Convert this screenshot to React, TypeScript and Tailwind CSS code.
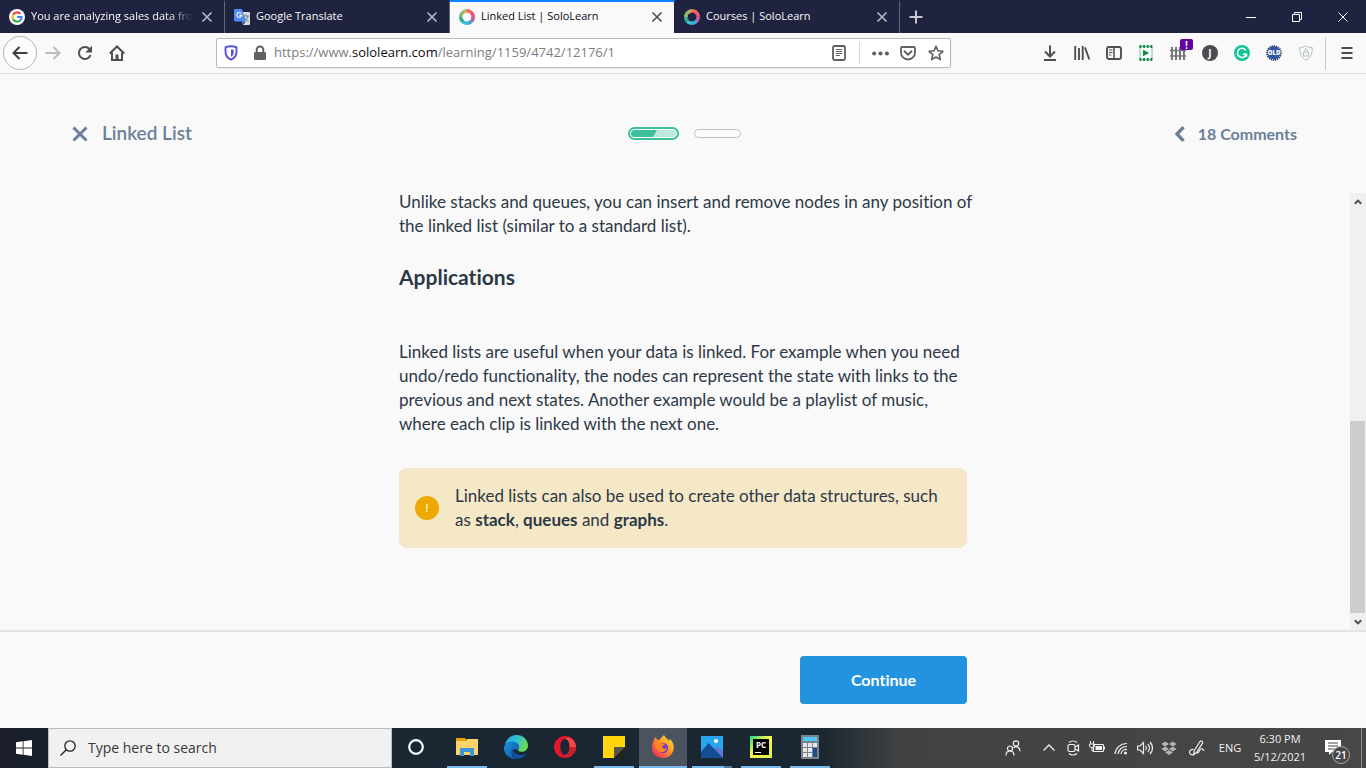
import React from "react";

type IconProps = { children: React.ReactNode; box?: string; className?: string };

function Svg({ children, box = "0 0 16 16", className = "size-4" }: IconProps) {
  return (
    <svg viewBox={box} className={`shrink-0 ${className}`} fill="none" aria-hidden="true">
      {children}
    </svg>
  );
}

function GoogleIcon() {
  return (
    <Svg>
      <circle cx="8" cy="8" r="8" fill="#fff" />
      <g strokeWidth="2.2">
        <path d="M4.1 5.7A4.6 4.6 0 0 1 11.3 4.8" stroke="#ea4335" />
        <path d="M4.1 5.7A4.6 4.6 0 0 0 4.1 10.4" stroke="#fbbc05" />
        <path d="M4.1 10.4A4.6 4.6 0 0 0 11 11.5" stroke="#34a853" />
        <path d="M8 8h4.6A4.6 4.6 0 0 1 11 11.5" stroke="#4285f4" />
      </g>
    </Svg>
  );
}

function TranslateIcon() {
  return (
    <Svg>
      <path d="M6 3h9a1 1 0 0 1 1 1v11a1 1 0 0 1-1 1H9z" fill="#dcdcdc" />
      <path d="M9 7h6M12 5.500V7M14 7c-.6 2.500-2 4-4 5M10.500 8.500c.6 1.500 2 3 4 3.800" stroke="#607d8b" />
      <path d="M1 0h7l3.800 12.500H1a1 1 0 0 1-1-1V1a1 1 0 0 1 1-1z" fill="#4f8cf5" />
      <path d="M7.300 4.600A2.400 2.400 0 1 0 7.600 6.400H5.500" stroke="#fff" strokeWidth="1.100" />
      <path d="M8.500 12.500h3.300L9.500 16z" fill="#3160c0" />
    </Svg>
  );
}

function SoloLearnIcon({ dark = false }: { dark?: boolean }) {
  const blades: [number, string][] = [
    [0, "#f0a35c"], [45, "#ef6a5a"], [90, "#e8577f"], [135, "#c45d9b"],
    [180, "#3fa7e0"], [225, "#3cc0d8"], [270, "#2fa98c"], [315, "#8cbf6c"],
  ];
  return (
    <Svg>
      <circle cx="8" cy="8" r="5" fill={dark ? "#202340" : "#fff"} />
      {blades.map(([angle, color]) => (
        <path key={angle} d="M2.600 2.600C5.200-.4 10.500-.8 13.400 2.400 10 2 7 2.700 4.700 5.400 3.800 4.700 3 3.700 2.600 2.600z" fill={color} transform={`rotate(${angle} 8 8)`} />
      ))}
    </Svg>
  );
}

function Tab({ title, icon, active = false, faded = false }: { title: string; icon: React.ReactNode; active?: boolean; faded?: boolean }) {
  return (
    <div
      role="tab"
      aria-selected={active}
      className={`flex w-[225px] items-center gap-1.5 border-t-2 border-r px-[9px] pb-0.5 text-[11px] ${
        active ? "border-t-[#0a84ff] border-r-[#202340] bg-[#f9f9fa] text-[#0c0c0d]" : "border-t-transparent border-r-[#62647c] text-[#f9f9fa]"
      }`}
    >
      {icon}
      <span className={`min-w-0 flex-1 whitespace-nowrap ${faded ? "[mask-image:linear-gradient(to_right,black_85%,transparent)]" : ""}`}>{title}</span>
      <button aria-label={`Close ${title}`} className="flex size-4 items-center justify-center">
        <Svg className={active ? "size-4 text-[#4a4a4f]" : "size-4 text-[#b9b9c4]"}>
          <path d="M3.500 3.500l9 9M12.500 3.500l-9 9" stroke="currentColor" strokeWidth="1.600" />
        </Svg>
      </button>
    </div>
  );
}

function ToolButton({ label, children }: { label: string; children: React.ReactNode }) {
  return (
    <button aria-label={label} className="relative flex h-8 w-8 shrink-0 items-center justify-center text-[#4e4e52]">
      {children}
    </button>
  );
}

function TabStrip() {
  return (
    <div className="flex h-[33px] justify-between bg-[#202340]">
      <div role="tablist" className="flex">
        <Tab title="You are analyzing sales data fro" icon={<GoogleIcon />} faded />
        <Tab title="Google Translate" icon={<TranslateIcon />} />
        <Tab title="Linked List | SoloLearn" icon={<SoloLearnIcon />} active />
        <Tab title="Courses | SoloLearn" icon={<SoloLearnIcon dark />} />
        <button aria-label="New tab" className="flex w-8 items-center justify-center">
          <Svg><path d="M8 1.500v13M1.500 8h13" stroke="#c9c9d2" strokeWidth="2" /></Svg>
        </button>
      </div>
      <div className="flex text-white">
        <button aria-label="Minimize" className="flex w-[46px] items-center justify-center">
          <Svg><path d="M3 8.500h10" stroke="currentColor" /></Svg>
        </button>
        <button aria-label="Restore" className="flex w-[46px] items-center justify-center">
          <Svg><path d="M3.500 5.500h7v7h-7zM5.500 5.500v-2h7v7h-2" stroke="currentColor" /></Svg>
        </button>
        <button aria-label="Close window" className="flex w-[46px] items-center justify-center">
          <Svg><path d="M3.500 3.500l9 9M12.500 3.500l-9 9" stroke="currentColor" /></Svg>
        </button>
      </div>
    </div>
  );
}

function Toolbar() {
  return (
    <div className="flex h-[41px] items-center border-b border-[#dcdcdf] bg-[#f9f9fa] px-[3px]">
      <button aria-label="Back" className="flex size-[34px] items-center justify-center rounded-full border border-[#b5b5b8] bg-[#fcfcfd] text-[#3f3f43]">
        <Svg><path d="M15.500 8H1.500M7.500 2l-6 6 6 6" stroke="currentColor" strokeWidth="2" /></Svg>
      </button>
      <ToolButton label="Forward">
        <Svg className="size-4 text-[#bcbcbe]"><path d="M.5 8h14M8.500 2l6 6-6 6" stroke="currentColor" strokeWidth="2" /></Svg>
      </ToolButton>
      <ToolButton label="Reload">
        <Svg>
          <path d="M13.600 10A6 6 0 1 1 12.400 3.900" stroke="currentColor" strokeWidth="2" />
          <path d="M15 .8v6.700H8.300z" fill="currentColor" />
        </Svg>
      </ToolButton>
      <ToolButton label="Home">
        <Svg>
          <path d="M.8 8.500L8 1.500l7.200 7" stroke="currentColor" strokeWidth="2" />
          <path d="M3 7.500V15h10V7.500" stroke="currentColor" strokeWidth="2" />
          <path d="M6.500 9.500h3V15h-3z" fill="currentColor" />
        </Svg>
      </ToolButton>
      <div className="w-[83px]" />
      <div className="flex h-[30px] min-w-0 flex-1 items-center rounded-xs border border-[#b9b9bb] bg-white px-1.5 text-[#5f5f63] shadow-xs">
        <Svg>
          <path d="M8 1.300c-2 0-4 .4-5.500 1v4.200c0 4 2 6.800 5.500 8.200 3.500-1.400 5.500-4.200 5.500-8.200V2.300c-1.500-.6-3.500-1-5.500-1z" stroke="#5a4fdc" strokeWidth="1.900" />
          <path d="M8 4.500c1 0 1.800.1 2.700.4v2.300c0 2-.9 3.500-2.700 4.600z" fill="#5a4fdc" />
        </Svg>
        <Svg className="ml-[13px] size-4">
          <path d="M4.700 7.500V4.800a3.300 3.300 0 0 1 6.600 0v2.700" stroke="currentColor" strokeWidth="2" />
          <rect x="2" y="7" width="12" height="8" rx="1.200" fill="currentColor" />
        </Svg>
        <div role="textbox" aria-label="Address" tabIndex={0} className="ml-1.5 min-w-0 flex-1 truncate text-[13px] text-[#7d7d80]">
          https://www.<span className="text-[#0c0c0d]">sololearn.com</span>/learning/1159/4742/12176/1
        </div>
        <button aria-label="Reader view">
          <Svg>
            <rect x="2" y="1" width="12" height="14" rx="1.500" stroke="currentColor" strokeWidth="1.800" />
            <path d="M4.800 4.500h6.400M4.800 6.500h6.400M4.800 8.500h6.400M4.800 10.500h4" stroke="currentColor" />
          </Svg>
        </button>
        <div className="mx-3 h-[22px] w-px bg-[#d7d7db]" />
        <button aria-label="Page actions">
          <Svg className="size-[17px]">
            <circle cx="2" cy="8" r="1.900" fill="currentColor" />
            <circle cx="8" cy="8" r="1.900" fill="currentColor" />
            <circle cx="14" cy="8" r="1.900" fill="currentColor" />
          </Svg>
        </button>
        <button aria-label="Save to Pocket" className="ml-[11px]">
          <Svg>
            <path d="M2.200 2h11.600a1.200 1.200 0 0 1 1.200 1.200v4.300a7 7 0 0 1-14 0V3.200A1.200 1.200 0 0 1 2.200 2z" stroke="currentColor" strokeWidth="1.800" />
            <path d="M4.500 6.200L8 9.600l3.500-3.400" stroke="currentColor" strokeWidth="2" strokeLinecap="round" />
          </Svg>
        </button>
        <button aria-label="Bookmark" className="ml-3">
          <Svg>
            <path d="M8 1.200l2 4.600 4.900.5-3.700 3.300 1.100 4.900L8 12l-4.300 2.500 1.100-4.900L1.100 6.300 6 5.800z" stroke="currentColor" strokeWidth="1.600" strokeLinejoin="round" />
          </Svg>
        </button>
      </div>
      <div className="w-[83px]" />
      <ToolButton label="Downloads">
        <Svg><path d="M8 .5v11M3 6.500l5 5 5-5M2 15h12" stroke="currentColor" strokeWidth="2" /></Svg>
      </ToolButton>
      <ToolButton label="Library">
        <Svg><path d="M1.200 1v14M5 3v12M8.700 1v14M11 2.500l4.300 12" stroke="currentColor" strokeWidth="1.900" /></Svg>
      </ToolButton>
      <ToolButton label="Sidebars">
        <Svg>
          <rect x="1" y="2" width="14" height="12" rx="2" stroke="currentColor" strokeWidth="1.900" />
          <path d="M8 2v12" stroke="currentColor" strokeWidth="1.500" />
          <path d="M3 5h3.500M3 7.500h3.500M3 10h2.500" stroke="currentColor" />
        </Svg>
      </ToolButton>
      <ToolButton label="Video helper">
        <Svg>
          <rect x="2" y="1.500" width="12" height="13" fill="#fff" stroke="#7fc29b" />
          <path d="M1.500 1.500h13M1.500 14.500h13" stroke="#138a48" strokeWidth="3" strokeDasharray="2 1.600" />
          <path d="M5 4.800v6.400L11.200 8z" fill="#138a48" />
        </Svg>
      </ToolButton>
      <ToolButton label="Blocker, 1 alert">
        <Svg className="size-4 text-[#77777a]">
          <path d="M2 2v13M6 2v13M10 2v13M14 2v13" stroke="currentColor" strokeWidth="2" />
          <path d="M0 5.500h16M0 11h16" stroke="currentColor" strokeWidth="1.300" />
        </Svg>
        <span className="absolute top-[2px] left-[18px] flex h-[11px] w-[13px] items-center justify-center rounded-xs bg-[#6200a4] text-[10px] leading-none font-bold text-white">!</span>
      </ToolButton>
      <ToolButton label="Account J">
        <span className="flex size-4 items-center justify-center rounded-full bg-[#4c4c50] text-[10px] font-bold text-white">J</span>
      </ToolButton>
      <ToolButton label="Grammarly">
        <Svg>
          <circle cx="8" cy="8" r="8" fill="#15c39a" />
          <path d="M11.800 5.200A4.600 4.600 0 1 0 12.400 9.300H9M12.400 9.300v2.500" stroke="#fff" strokeWidth="1.600" />
        </Svg>
      </ToolButton>
      <ToolButton label="Old layout">
        <span className="relative flex size-4 items-center justify-center">
          <Svg>
            <circle cx="8" cy="8" r="6.800" stroke="#26364f" strokeWidth="2" strokeDasharray="1.300 .8" />
            <circle cx="8" cy="8" r="6.400" fill="#2d56a6" />
          </Svg>
          <span className="absolute text-[6px] font-black text-white">OLD</span>
        </span>
      </ToolButton>
      <ToolButton label="Privacy">
        <Svg className="size-4 text-[#b4bec0]">
          <path d="M8 .8C6 2 4 2.600 1.700 2.600c0 6 1.500 10 6.300 12.700 4.800-2.700 6.300-6.700 6.300-12.700C12 2.600 10 2 8 .8z" stroke="currentColor" />
          <path d="M5.500 7h5v4h-5zM6.500 7V5.500a1.500 1.500 0 0 1 3 0V7M8 8.500v1" stroke="currentColor" />
        </Svg>
      </ToolButton>
      <div className="mr-[5px] ml-[3px] h-[33px] w-px bg-[#c9c9cc]" />
      <ToolButton label="Menu">
        <Svg><path d="M2.500 3h11M2.500 8h11M2.500 13h11" stroke="currentColor" strokeWidth="2" /></Svg>
      </ToolButton>
    </div>
  );
}

function LessonHeader() {
  return (
    <header className="grid h-[116px] shrink-0 grid-cols-[1fr_auto_1fr] items-center pt-[3px] pr-[69px] pl-[72px] font-bold text-[#6b7f99]">
      <div className="flex items-center gap-3.5">
        <button aria-label="Close lesson">
          <Svg><path d="M1.500 1.500l13 13M14.500 1.500l-13 13" stroke="currentColor" strokeWidth="3" /></Svg>
        </button>
        <h1 className="text-[19px] font-semibold">Linked List</h1>
      </div>
      <div className="flex items-center gap-[15px]">
        <div className="h-[13px] w-[51px] rounded-full border-2 border-[#3dbf9b] bg-white p-px">
          <div className="h-full rounded-full bg-[linear-gradient(120deg,#3dbf9b_52%,#bdeadd_54%)]" />
        </div>
        <div className="h-[9px] w-[47px] rounded-full border border-[#b4c0c8] bg-[#fcfcfc]" />
      </div>
      <a href="#comments" className="flex items-center gap-3 justify-self-end text-base">
        <Svg className="h-4 w-3" box="0 0 12 16"><path d="M9.500 1.200L3 8l6.500 6.800" stroke="currentColor" strokeWidth="3.400" /></Svg>
        18 Comments
      </a>
    </header>
  );
}

function Scrollbar() {
  return (
    <div className="mt-[3px] flex w-4 shrink-0 flex-col bg-[#f0f0f0] text-[#505050]">
      <button aria-label="Scroll up" className="flex h-[17px] items-center justify-center">
        <Svg className="size-2" box="0 0 8 8"><path d="M.8 5.800L4 2.600l3.200 3.200" stroke="currentColor" strokeWidth="2" /></Svg>
      </button>
      <div className="flex-1" />
      <div className="mr-px h-48 bg-[#cdcdcd]" />
      <button aria-label="Scroll down" className="flex h-[17px] items-center justify-center">
        <Svg className="size-2" box="0 0 8 8"><path d="M.8 2.200L4 5.400l3.200-3.200" stroke="currentColor" strokeWidth="2" /></Svg>
      </button>
    </div>
  );
}

function Lesson() {
  return (
    <main className="flex flex-1 text-[17px] leading-6 text-[#2d3846]">
      <div className="flex-1 pl-4">
        <article className="mx-auto max-w-[568px] whitespace-nowrap">
          <p>
            Unlike stacks and queues, you can insert and remove nodes in any position of<br />
            the linked list (similar to a standard list).
          </p>
          <h2 className="mt-6 mb-12 text-[21px] leading-[30px] font-bold">Applications</h2>
          <p>
            Linked lists are useful when your data is linked. For example when you need<br />
            undo/redo functionality, the nodes can represent the state with links to the<br />
            previous and next states. Another example would be a playlist of music,<br />
            where each clip is linked with the next one.
          </p>
          <aside className="mt-8 flex items-center gap-4 rounded-lg bg-[#f5e8c7] p-4">
            <span className="flex size-6 shrink-0 items-center justify-center rounded-full bg-[#eda900] text-xs leading-none font-bold text-[#fdf3d8]">!</span>
            <p>
              Linked lists can also be used to create other data structures, such<br />
              as <strong>stack</strong>, <strong>queues</strong> and <strong>graphs</strong>.
            </p>
          </aside>
        </article>
      </div>
      <Scrollbar />
    </main>
  );
}

function TaskButton({ label, children, running = false, active = false, stacked = false }: { label: string; children: React.ReactNode; running?: boolean; active?: boolean; stacked?: boolean }) {
  return (
    <button aria-label={label} className={`flex h-10 w-12 flex-col items-center ${active ? "bg-[#4b545e]" : ""}`}>
      <span className="flex flex-1 items-center">{children}</span>
      <span className={`flex h-0.5 justify-end ${active ? "w-full" : "w-10"} ${running || active ? "bg-[#76b9ed]" : ""}`}>
        {stacked && <span className="h-full w-2 bg-[#4f7da3]" />}
      </span>
    </button>
  );
}

function TaskIcons() {
  return (
    <div className="flex gap-px">
      <div className="mr-0.5">
        <TaskButton label="Cortana">
          <Svg><circle cx="8" cy="8" r="6.800" stroke="#fff" strokeWidth="2.200" /></Svg>
        </TaskButton>
      </div>
      <TaskButton label="File Explorer" running>
        <Svg className="size-6" box="0 0 24 24">
          <path d="M1 3h9l1.500 2H22v14H1z" fill="#e8a50a" />
          <path d="M1 6h10l1-2h11v16H1z" fill="#fbd56b" />
          <path d="M5 21v-8h14v8h-4v-4H9v4z" fill="#3f95da" />
        </Svg>
      </TaskButton>
      <TaskButton label="Microsoft Edge">
        <Svg className="size-6" box="0 0 24 24">
          <defs>
            <linearGradient id="edgeTop" x1="0" y1="0" x2="1" y2=".4"><stop stopColor="#1ba2e6" /><stop offset=".55" stopColor="#35c1d0" /><stop offset="1" stopColor="#66dc55" /></linearGradient>
            <linearGradient id="edgeLow" x1="0" y1="0" x2="1" y2="1"><stop stopColor="#1b96e0" /><stop offset="1" stopColor="#0c4f9e" /></linearGradient>
          </defs>
          <path d="M1 9.500C2.400 3.600 7 0 12.500 0 19 0 24 4.800 24 10.500c0 4-3 6.300-6.300 6.300-2.400 0-3.700-.8-3.700-1.700 0-.7 1-1.200 1-3 0-2.900-3-5.100-6.500-5.100C5 7 2.200 8.200 1 9.500z" fill="url(#edgeTop)" />
          <path d="M0 12.500C.3 9 4 6.600 8.500 6.600c4 0 6.500 2.600 6.500 5.500 0 1.800-1 2.300-1 3-3-2-6.500 0-6.300 3.200.2 2.700 2.300 5 5.300 5.700C5.500 24.500-.4 19 0 12.500z" fill="url(#edgeLow)" />
          <path d="M8.300 13.500C6 19 10 24 14.500 23.700c3.500-.4 6.500-2.300 8-5.200-5 2.700-12.800 1.500-14.200-5z" fill="#114f9f" />
        </Svg>
      </TaskButton>
      <TaskButton label="Opera">
        <Svg className="size-6" box="0 0 24 24">
          <path fillRule="evenodd" d="M12 1a11 11 0 1 0 0 22 11 11 0 0 0 0-22zm0 3c2.800 0 4.600 3.500 4.600 8S14.800 20 12 20s-4.600-3.500-4.600-8S9.200 4 12 4z" fill="#e3162a" />
          <path d="M12 4c1.200-1 3.200-1.600 5-.9 3.600 1.700 6 5 6 8.900s-2.400 7.200-6 8.900c-1.800.7-3.800.1-5-.9 2.800 0 4.600-3.500 4.600-8S14.800 4 12 4z" fill="#f2484d" />
          <path d="M12 20c1.200 1 3.200 1.600 5 .9 3.600-1.700 6-5 6-8.900l-6.400 0c0 4.500-1.800 8-4.600 8z" fill="#c5202c" />
        </Svg>
      </TaskButton>
      <TaskButton label="Sticky Notes" running>
        <Svg className="size-6" box="0 0 24 24">
          <path d="M1 1h22v22H1z" fill="#ffd60a" />
          <path d="M12 23V12h11v11z" fill="#55554a" />
          <path d="M12 23l11-11v11z" fill="#23231f" />
        </Svg>
      </TaskButton>
      <TaskButton label="Firefox" active>
        <Svg className="size-6" box="0 0 24 24">
          <defs>
            <linearGradient id="fox" x1="1" y1="0" x2=".1" y2="1"><stop stopColor="#fff04a" /><stop offset=".45" stopColor="#ff9a1f" /><stop offset="1" stopColor="#f0206b" /></linearGradient>
          </defs>
          <path d="M3 5l1-3 2.500 3 2-.2C10 2.500 12 1.500 13 0c1 2.500 4 4 5 6l1-2c3 3 4.500 7 3.500 11-1.300 5-5.500 8-10.500 8S2 19.500 1.200 15C.6 11 1.500 8 3 5z" fill="url(#fox)" />
          <circle cx="12" cy="13" r="5.200" fill="#7340c9" />
          <path d="M4 8c2.500-2 5-1 7 .5l3 .2c-.5 1.800-3 1.800-3 3.300 1 2 3.500 2 5 1-1 4-6 5.500-9 3S3.500 10.500 4 8z" fill="#ff8426" />
        </Svg>
      </TaskButton>
      <TaskButton label="Photos" running stacked>
        <Svg className="size-6" box="0 0 24 24">
          <path d="M1 1h22v22H1z" fill="#27a5f1" />
          <path d="M13 15l4-4 6 6v6H13z" fill="#5c78d6" />
          <path d="M1 17l7.500-9L23 23H1z" fill="#134e91" />
          <circle cx="16" cy="6" r="2.100" fill="#fff" />
        </Svg>
      </TaskButton>
      <TaskButton label="PyCharm" running>
        <span className="flex size-[22px] items-center justify-center bg-[linear-gradient(135deg,#21d789,#fcf84a_45%,#d9f04f)]">
          <span className="flex size-4 flex-col justify-between bg-black p-0.5 text-[8px] leading-none font-bold text-white">
            PC
            <span className="h-px w-1.5 bg-white" />
          </span>
        </span>
      </TaskButton>
      <TaskButton label="Calculator" running>
        <Svg className="size-6" box="0 0 24 24">
          <path d="M3 0h18v24H3z" fill="#7b8289" />
          <path d="M5 2h14v4H5z" fill="#4dc8f4" />
          <path d="M5 8h4v4H5zM10 8h4v4h-4zM15 8h4v4h-4zM5 13h4v4H5zM10 13h4v4h-4zM5 18h4v4H5zM10 18h4v4h-4z" fill="#e6e8ea" />
          <path d="M15 13h4v9h-4z" fill="#174f92" />
        </Svg>
      </TaskButton>
    </div>
  );
}

function Tray() {
  return (
    <div className="flex items-center text-[11px] text-[#f0f0f0]">
      <button aria-label="People" className="flex w-12 justify-center">
        <Svg>
          <circle cx="11" cy="3.500" r="2.700" stroke="currentColor" strokeWidth="1.200" />
          <circle cx="5" cy="8.500" r="2.500" stroke="currentColor" strokeWidth="1.200" />
          <path d="M1 15.500c0-6 8-6 8 0M8.500 7.800c3-2.500 6.500-.5 6.500 3.500" stroke="currentColor" strokeWidth="1.200" />
        </Svg>
      </button>
      <button aria-label="Show hidden icons" className="flex w-6 justify-center">
        <Svg><path d="M2.500 10.500L8 5l5.500 5.500" stroke="currentColor" strokeWidth="1.300" /></Svg>
      </button>
      <button aria-label="Meet Now" className="flex w-6 justify-center">
        <Svg>
          <rect x="3" y="4.500" width="7" height="7" rx="1.500" stroke="currentColor" strokeWidth="1.200" />
          <path d="M10 7l3.500-2v6L10 9M4 2.500C6 .5 10 .5 12 2.500M4 13.500c2 2 6 2 8 0" stroke="currentColor" strokeWidth="1.200" />
        </Svg>
      </button>
      <button aria-label="Battery charging" className="flex w-6 justify-center">
        <Svg>
          <path d="M4.500 4.500h10v7h-10zM15.500 6.500v3M1.500 1v3M4.500 1v3M.5 4h5v2c0 1-1 1.500-2.500 1.500S.5 7 .5 6zM3 7.500v3.500h2" stroke="currentColor" />
          <path d="M6.500 6h6.500v4H6.500z" fill="currentColor" />
        </Svg>
      </button>
      <button aria-label="Network" className="flex w-6 justify-center">
        <Svg>
          <path d="M2 14A11.500 11.500 0 0 1 14 3.500M5 14a8.500 8.500 0 0 1 9-7.500M8 14a5.500 5.500 0 0 1 6-4.500" stroke="currentColor" strokeWidth="1.200" />
          <circle cx="12.500" cy="13" r="1.500" fill="currentColor" />
        </Svg>
      </button>
      <button aria-label="Volume" className="flex w-6 justify-center">
        <Svg>
          <path d="M.5 6v4H3l3.500 3.500v-11L3 6zM8.500 6c1 1 1 3 0 4M10.800 4c2.200 2 2.200 6 0 8M13 2c3.300 3.500 3.300 8.500 0 12" stroke="currentColor" strokeWidth="1.200" />
        </Svg>
      </button>
      <button aria-label="Dropbox" className="flex w-6 justify-center">
        <Svg>
          <path d="M4.200 1.500L8 4 4.200 6.500.4 4zM11.800 1.500L15.600 4l-3.800 2.500L8 4zM4.200 6.500L8 9l-3.800 2.500L.4 9zM11.800 6.500L15.600 9l-3.800 2.500L8 9zM8 10l3.800 2.500L8 15l-3.800-2.500z" fill="#b3b3b3" />
        </Svg>
      </button>
      <button aria-label="Windows Ink" className="flex w-8 justify-center">
        <Svg>
          <path d="M5 11L11 1.500c1-1.300 3.300 0 2.500 1.600L7.500 12.500 4.800 14zM7.500 12.500c3 2 2.500-4 5-4 1.500 0 .5 2.500 3 1.500M4.500 9.500c-3-.5-4.500 2-3.800 3.700C1.500 15 4 15 6 14.500" stroke="currentColor" strokeWidth="1.200" />
        </Svg>
      </button>
      <button className="w-[34px] text-center">ENG</button>
      <button className="w-[66px] text-center leading-[18px] whitespace-nowrap">
        6:30 PM<br />5/12/2021
      </button>
      <button aria-label="21 notifications" className="relative flex h-10 w-12 items-center justify-center">
        <Svg className="-ml-2 size-4">
          <path d="M0 0h16v12H7l-3 3v-3H0z" fill="#fff" />
          <path d="M3 3h10M3 6h10M3 9h7" stroke="#474747" />
        </Svg>
        <span className="absolute top-[18px] left-[19px] flex size-[18px] items-center justify-center rounded-full border border-[#a9a9a9] bg-[#474747] text-[10px] font-semibold text-white">21</span>
      </button>
      <span className="h-10 w-[5px] border-l border-[#8c8c8c]" />
    </div>
  );
}

function Taskbar() {
  return (
    <div className="flex h-10 justify-between bg-[linear-gradient(to_right,#1a1f29_0%,#1a2834_28%,#1a2631_60%,#424242_66%,#474747_100%)] font-['Open_Sans','Noto_Sans',sans-serif]">
      <div className="flex">
        <button aria-label="Start" className="flex w-12 items-center justify-center">
          <Svg><path d="M0 2.300l6.700-1v6.200H0zM7.500 1.200L16 0v7.500H7.500zM0 8.400h6.700v6.300L0 13.700zM7.500 8.400H16V16l-8.500-1.200z" fill="#fff" /></Svg>
        </button>
        <label className="flex w-[344px] items-center gap-3 border border-[#bdbdbd] bg-[#f1f1f1] pl-[11px]">
          <Svg><circle cx="10" cy="6" r="5.200" stroke="#222" strokeWidth="1.300" /><path d="M6.300 9.700L.5 15.500" stroke="#222" strokeWidth="1.300" /></Svg>
          <input type="text" aria-label="Search" placeholder="Type here to search" className="min-w-0 flex-1 bg-transparent text-sm outline-none placeholder:text-[#383838]" />
        </label>
        <TaskIcons />
      </div>
      <Tray />
    </div>
  );
}

export default function App() {
  return (
    <div className="flex min-h-screen flex-col bg-[#f9f9f9] font-['Lato','Noto_Sans',sans-serif] [font-variant-ligatures:no-common-ligatures]">
      <div className="font-['Open_Sans','Noto_Sans',sans-serif]">
        <TabStrip />
        <Toolbar />
      </div>
      <LessonHeader />
      <Lesson />
      <footer className="border-t-2 border-[#e1e3e4] py-6">
        <div className="mx-auto flex max-w-[568px] justify-end">
          <button className="h-12 w-[167px] rounded-sm bg-[#2493df] text-base font-bold text-white">Continue</button>
        </div>
      </footer>
      <Taskbar />
    </div>
  );
}
